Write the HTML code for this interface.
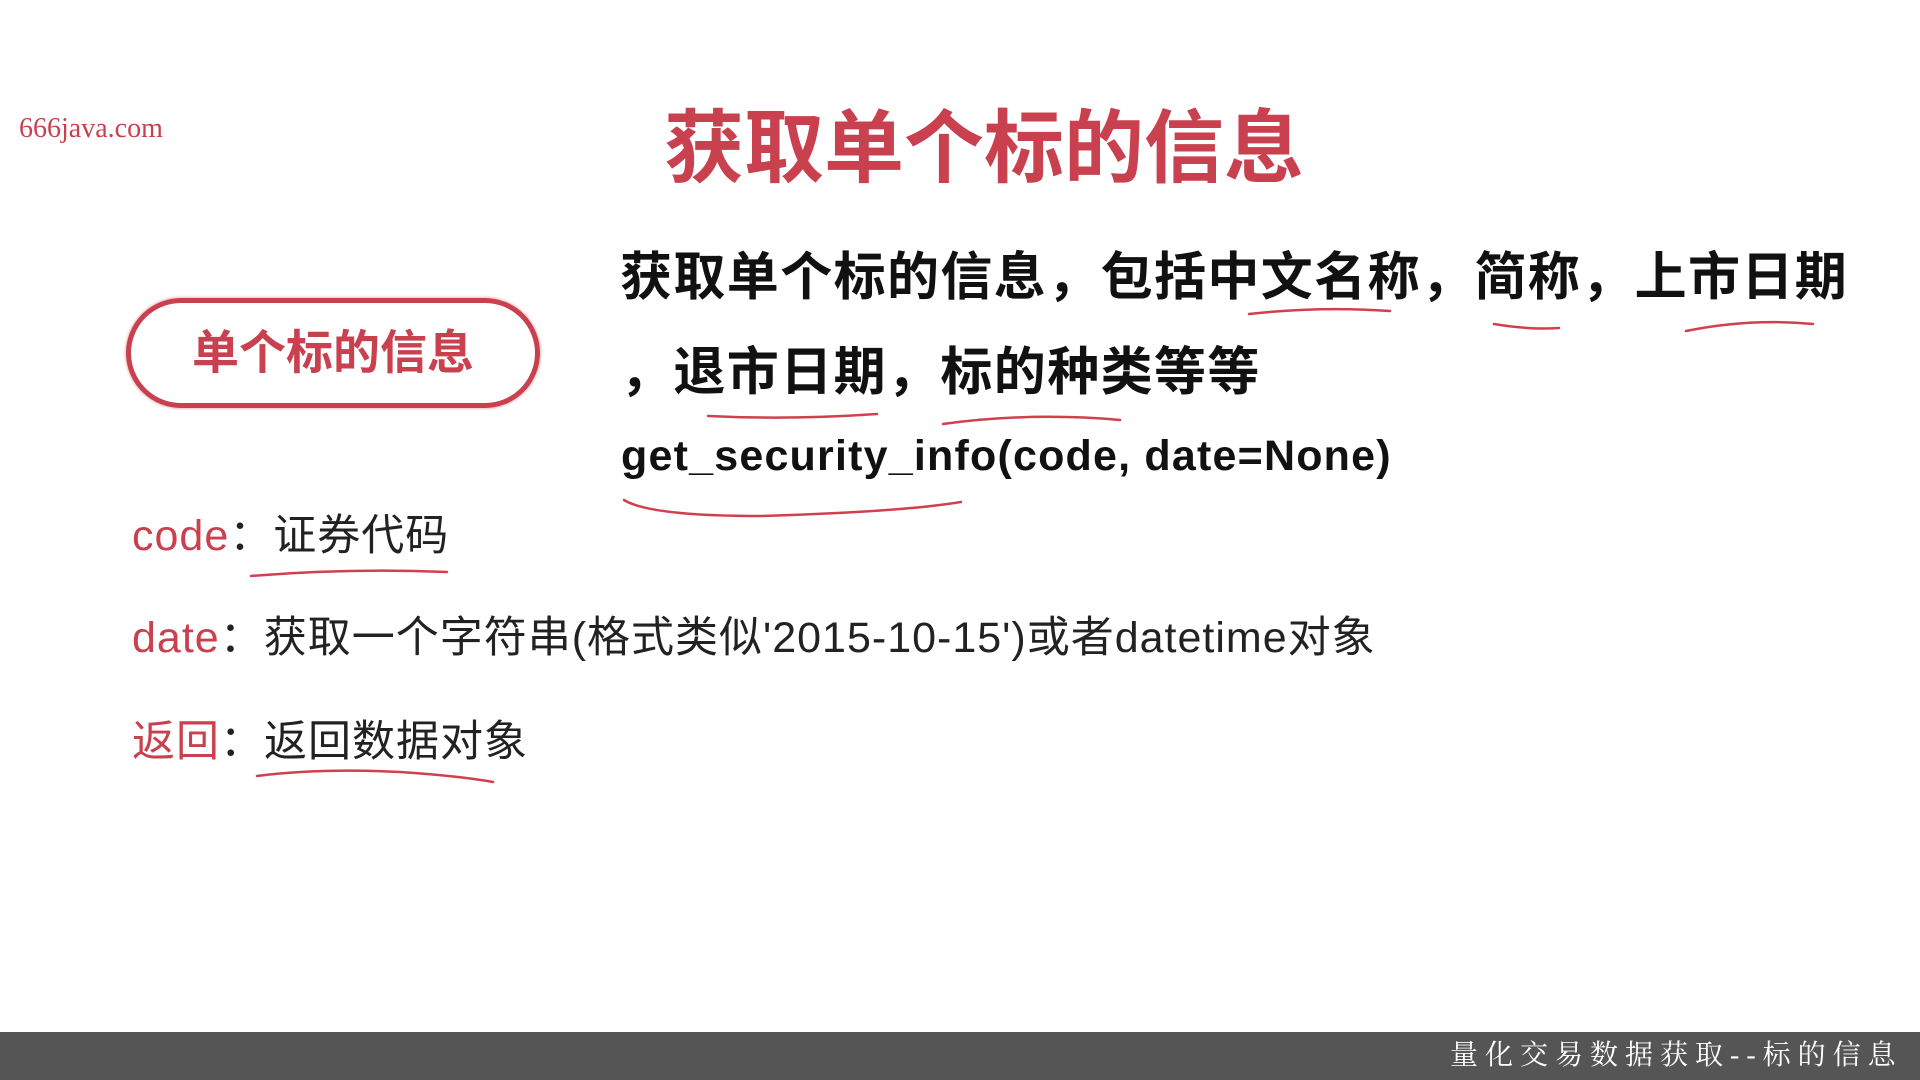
<!DOCTYPE html>
<html><head><meta charset="utf-8"><style>
html,body{margin:0;padding:0;}
body{width:1920px;height:1080px;background:#fff;position:relative;overflow:hidden;font-family:"Liberation Sans","Noto Sans CJK SC",sans-serif;}
.a{position:absolute;white-space:nowrap;}
.red{color:#c9404f;}
</style></head><body>
<div class="a red" style="left:19px;top:113px;font-family:'Liberation Serif',serif;font-size:28px;">666java.com</div>
<div class="a red" style="left:664px;top:101px;font-size:80px;font-weight:bold;line-height:96px;">获取单个标的信息</div>
<div class="a" style="left:126px;top:298px;width:404px;height:100px;border:5px solid #c9404f;border-radius:56px;box-shadow:0 0 3px #d88;"></div>
<div class="a red" style="left:126px;top:325px;width:414px;text-align:center;font-size:47px;font-weight:bold;line-height:56px;">单个标的信息</div>
<div class="a" style="left:620px;top:246px;font-size:52px;font-weight:bold;line-height:64px;color:#111;letter-spacing:1.4px;">获取单个标的信息，包括中文名称，简称，上市日期</div>
<div class="a" style="left:620px;top:341px;font-size:52px;font-weight:bold;line-height:64px;color:#111;letter-spacing:1.4px;">，退市日期，标的种类等等</div>
<div class="a" style="left:621px;top:430px;font-size:43px;font-weight:bold;line-height:52px;color:#111;letter-spacing:1.2px;">get_security_info(code, date=None)</div>
<div class="a" style="left:132px;top:511px;font-size:43px;line-height:50px;color:#222;letter-spacing:1px;"><span class="red">code</span>：证券代码</div>
<div class="a" style="left:132px;top:613px;font-size:43px;line-height:50px;color:#222;letter-spacing:1px;"><span class="red">date</span>：获取一个字符串(格式类似'2015-10-15')或者datetime对象</div>
<div class="a" style="left:132px;top:717px;font-size:43px;line-height:50px;color:#222;letter-spacing:1px;"><span class="red">返回</span>：返回数据对象</div>
<svg class="a" style="left:0;top:0" width="1920" height="1080" fill="none" stroke="#d0404f" stroke-width="2.5" stroke-linecap="round">
<path d="M1249 314 Q1320 306 1390 311"/>
<path d="M1494 324 Q1530 330 1559 328"/>
<path d="M1686 331 Q1750 318 1813 324"/>
<path d="M708 416 Q790 420 877 414"/>
<path d="M943 424 Q1030 412 1120 420"/>
<path d="M624 500 Q650 516 760 516 Q900 512 961 502"/>
<path d="M251 576 Q350 568 447 572"/>
<path d="M257 776 Q320 768 400 772 Q460 776 493 782"/>
</svg>
<div class="a" style="left:0;top:1032px;width:1920px;height:48px;background:#555;"></div>
<div class="a" style="left:1450px;top:1038px;font-size:28px;line-height:36px;color:#fff;letter-spacing:7px;font-family:'Liberation Serif','Noto Serif CJK SC',serif;">量化交易数据获取--标的信息</div>
</body></html>
